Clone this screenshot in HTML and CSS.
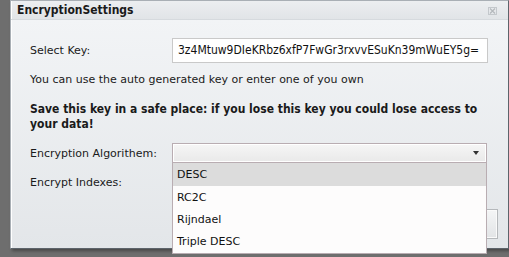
FILE: index.html
```html
<!DOCTYPE html>
<html>
<head>
<meta charset="utf-8">
<link rel="stylesheet" href="styles.css">
</head>
<body>
<div class="dialog">
  <div class="titlebar">
    <span class="title">EncryptionSettings</span>
    <span class="close"><svg width="9" height="8" viewBox="0 0 9 8"><rect x="0.5" y="0.5" width="8" height="7" fill="none" stroke="#c4c8cc"/><path d="M2 1.5 L7 6.5 M7 1.5 L2 6.5" stroke="#b4b8bc" stroke-width="1.2"/></svg></span>
  </div>
  <div class="content">
    <div class="row row-key">
      <span class="label">Select Key:</span>
      <div class="input">3z4Mtuw9DIeKRbz6xfP7FwGr3rxvvESuKn39mWuEY5g=</div>
    </div>
    <p class="hint">You can use the auto generated key or enter one of you own</p>
    <p class="warn">Save this key in a safe place: if you lose this key you could lose access to your data!</p>
    <div class="row row-algo">
      <span class="label">Encryption Algorithem:</span>
      <div class="select-wrap">
        <div class="select"><span class="arrow"></span></div>
        <ul class="list">
          <li class="item active">DESC</li>
          <li class="item tall">RC2C</li>
          <li class="item">Rijndael</li>
          <li class="item">Triple DESC</li>
        </ul>
      </div>
    </div>
    <div class="row row-idx">
      <span class="label">Encrypt Indexes:</span>
    </div>
    <div class="footer">
      <div class="button"></div>
    </div>
  </div>
</div>
</body>
</html>
```

FILE: styles.css
```css
html, body {
  margin: 0;
  padding: 0;
}
body {
  background: #6e6e6e;
  width: 509px;
  height: 257px;
  overflow: hidden;
  font-family: "DejaVu Sans", sans-serif;
  font-size: 11px;
  color: #1a1a1a;
}
.dialog {
  margin-left: 10px;
  width: 497px;
  height: 247px;
  border: 1px solid #5d646b;
  border-top-color: #a9afb5;
  border-left-color: #a9afb5;
  box-shadow: 2px 2px 3px rgba(0,0,0,0.35);
  display: flex;
  flex-direction: column;
  background: #e4e7ea;
}
.titlebar {
  height: 18px;
  flex: none;
  display: flex;
  align-items: center;
  justify-content: space-between;
  padding: 0 11px 0 6px;
  background: linear-gradient(#eceef0, #e1e4e7);
  border-bottom: 1px solid #d6dade;
  box-shadow: inset 1px 0 0 #fff;
}
.title {
  font-family: "DejaVu Sans Condensed", "DejaVu Sans", sans-serif;
  font-weight: bold;
  font-size: 12px;
  color: #1a1a1a;
}
.close {
  display: flex;
  height: 8px;
  margin-top: 1px;
}
.content {
  flex: 1;
  position: relative;
  padding: 18px 19px 0 19px;
  background: linear-gradient(#f2f4f6, #e3e6e9);
  box-shadow: inset 1px 0 0 #fff;
}
.row {
  display: grid;
  grid-template-columns: 142px 1fr;
  align-items: center;
}
.input {
  height: 23px;
  line-height: 23px;
  border: 1px solid #c9c9c9;
  background: #fff;
  padding-left: 5px;
  width: 309px;
  font-family: "DejaVu Sans Condensed", "DejaVu Sans", sans-serif;
  font-size: 12px;
  white-space: nowrap;
  overflow: hidden;
  color: #111;
}
.hint {
  margin: 9px 0 0 0;
  line-height: 16px;
}
.warn {
  margin: 14px 0 0 0;
  font-family: "DejaVu Sans Condensed", "DejaVu Sans", sans-serif;
  font-weight: bold;
  font-size: 12px;
  line-height: 15px;
  width: 460px;
}
.row-algo {
  margin-top: 11px;
}
.select-wrap {
  position: relative;
  width: 315px;
}
.select {
  height: 18px;
  border: 1px solid #b9adb2;
  box-shadow: inset 0 0 0 1px #fff;
  background: linear-gradient(#f6f6f6, #e9e9e9);
  position: relative;
}
.arrow {
  position: absolute;
  right: 7px;
  top: 7px;
  width: 0;
  height: 0;
  border-left: 3.5px solid transparent;
  border-right: 3.5px solid transparent;
  border-top: 4px solid #333;
}
.list {
  position: absolute;
  left: 0;
  top: 20px;
  width: 313px;
  margin: 0;
  padding: 0;
  list-style: none;
  border: 1px solid #b9adb2;
  border-top: none;
  background: #fdfcfc;
  z-index: 2;
}
.item {
  height: 22px;
  line-height: 22px;
  padding-left: 4px;
  color: #111;
}
.item.active {
  background: #dcdcdc;
  height: 23px;
  line-height: 24px;
}
.item.tall {
  height: 23px;
  line-height: 23px;
}
.row-idx {
  margin-top: 12px;
  height: 14px;
}
.footer {
  display: flex;
  justify-content: flex-end;
  margin-top: 20px;
  margin-right: -9px;
}
.button {
  width: 90px;
  height: 28px;
  border: 1px solid #b5b8bb;
  box-shadow: inset 0 0 0 1px #fafafa;
  background: linear-gradient(#f4f5f6, #e2e4e6);
}
```
